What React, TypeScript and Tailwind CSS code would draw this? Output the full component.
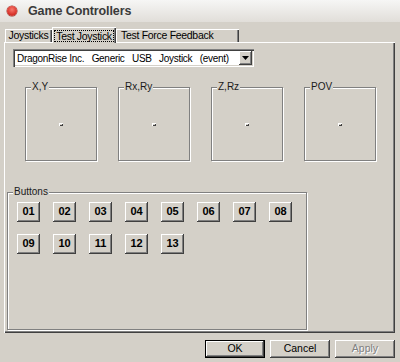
import React from "react";

const raised =
  "shadow-[inset_-1px_-1px_#404040,inset_1px_1px_#ffffff,inset_-2px_-2px_#808080]";

function AxisBox({ label }: { label: string }) {
  return (
    <div className="relative w-[72px] h-[74px] border border-[#808080] shadow-[inset_1px_1px_#ffffff,1px_1px_#ffffff] flex items-center justify-center">
      <span className="absolute left-[5px] top-[-7px] bg-[#d4d0c8] px-[1px] text-[10px] leading-[12px] text-[#1a1a1a]">
        {label}
      </span>
      <div className="w-[4px] h-[3px] bg-[#d4d0c8] shadow-[inset_1px_1px_#ffffff,inset_-1px_-1px_#404040]" />
    </div>
  );
}

export default function App() {
  const nums = ["01", "02", "03", "04", "05", "06", "07", "08", "09", "10", "11", "12", "13"];
  return (
    <div className="w-[400px] h-[362px] bg-[#d4d0c8] flex flex-col font-['Liberation_Sans',sans-serif] text-[10px] text-black overflow-hidden">
      {/* title bar */}
      <div className="h-[22px] shrink-0 flex items-center bg-gradient-to-b from-[#f6f6f5] to-[#e1ded9]">
        <div className="ml-[7px] w-[10px] h-[10px] rounded-full bg-[radial-gradient(circle_at_50%_35%,#f7796e,#d9352c_60%,#b3231c)] shadow-[0_0_0_0.5px_#9a2a22]" />
        <span className="ml-[11px] font-bold text-[12.5px] text-[#3a3a3a] tracking-[-0.1px]">
          Game Controllers
        </span>
      </div>

      <div className="flex flex-col pl-[4px] pt-[5px]">
        {/* tabs */}
        <div className="h-[15px] flex items-end pl-[1px]">
          <div className="w-[47px] h-[13px] flex items-center justify-center shadow-[inset_1px_1px_#ffffff,inset_-1px_0_#404040,inset_-2px_0_#808080] text-[10.5px] tracking-[-0.3px]">
            Joysticks
          </div>
          <div className="relative z-10 translate-y-[1px] w-[64px] h-[16px] bg-[#d4d0c8] flex items-start justify-center pt-[3px] shadow-[inset_1px_1px_#ffffff,inset_-1px_0_#404040,inset_-2px_0_#808080]">
            <span className="border border-dotted border-black px-[1px] leading-[10px] h-[12px] text-[10.5px] tracking-[-0.3px]">
              Test Joystick
            </span>
          </div>
          <div className="w-[123px] h-[13px] flex items-center pl-[5px] shadow-[inset_1px_1px_#ffffff,inset_-1px_0_#404040,inset_-2px_0_#808080] text-[10.5px] tracking-[-0.3px]">
            Test Force Feedback
          </div>
        </div>

        {/* panel */}
        <div className="w-[391px] h-[291px] flex flex-col shadow-[inset_1px_1px_#ffffff,inset_-1px_-1px_#404040,inset_-2px_-2px_#808080]">
          {/* combobox */}
          <div className="ml-[9px] mt-[7px] w-[241px] h-[18px] bg-white flex items-center shadow-[inset_1px_1px_#808080,inset_2px_2px_#404040,inset_-1px_-1px_#ffffff,inset_-2px_-2px_#d4d0c8]">
            <span className="pl-[4px] flex-1 whitespace-pre text-[10px] tracking-[-0.3px]">
              {"DragonRise Inc.   Generic   USB   Joystick   (event)"}
            </span>
            <div className={`mr-[2px] w-[13px] h-[14px] bg-[#d4d0c8] flex items-center justify-center ${raised}`}>
              <svg width="7" height="4" viewBox="0 0 7 4">
                <polygon points="0,0 7,0 3.5,4" fill="#000" />
              </svg>
            </div>
          </div>

          {/* axes */}
          <div className="ml-[21px] mt-[20px] flex gap-[21px]">
            <AxisBox label="X,Y" />
            <AxisBox label="Rx,Ry" />
            <AxisBox label="Z,Rz" />
            <AxisBox label="POV" />
          </div>

          {/* buttons group */}
          <div className="relative ml-[3px] mt-[31px] w-[300px] h-[138px] border border-[#808080] shadow-[inset_1px_1px_#ffffff,1px_1px_#ffffff] pl-[9px] pt-[9px]">
            <span className="absolute left-[5px] top-[-7px] bg-[#d4d0c8] px-[1px] text-[10px] leading-[12px] text-[#1a1a1a]">
              Buttons
            </span>
            <div className="grid grid-cols-[repeat(8,23px)] gap-x-[13px] gap-y-[12px]">
              {nums.map((n) => (
                <div
                  key={n}
                  className={`w-[23px] h-[20px] bg-[#d4d0c8] flex items-center justify-center font-bold text-[11px] pb-[1px] ${raised}`}
                >
                  {n}
                </div>
              ))}
            </div>
          </div>
        </div>
      </div>

      {/* footer buttons */}
      <div className="mt-[7px] flex justify-end gap-[5px] pr-[5px]">
        <div className="w-[60px] h-[18px] flex items-center justify-center text-[10.5px] shadow-[inset_0_0_0_1px_#000000,inset_-2px_-2px_#404040,inset_2px_2px_#ffffff,inset_-3px_-3px_#808080]">
          OK
        </div>
        <div className={`w-[60px] h-[18px] flex items-center justify-center text-[10.5px] ${raised}`}>
          Cancel
        </div>
        <div className={`w-[60px] h-[18px] flex items-center justify-center text-[10.5px] text-[#808080] [text-shadow:1px_1px_0_#ffffff] ${raised}`}>
          Apply
        </div>
      </div>
    </div>
  );
}
